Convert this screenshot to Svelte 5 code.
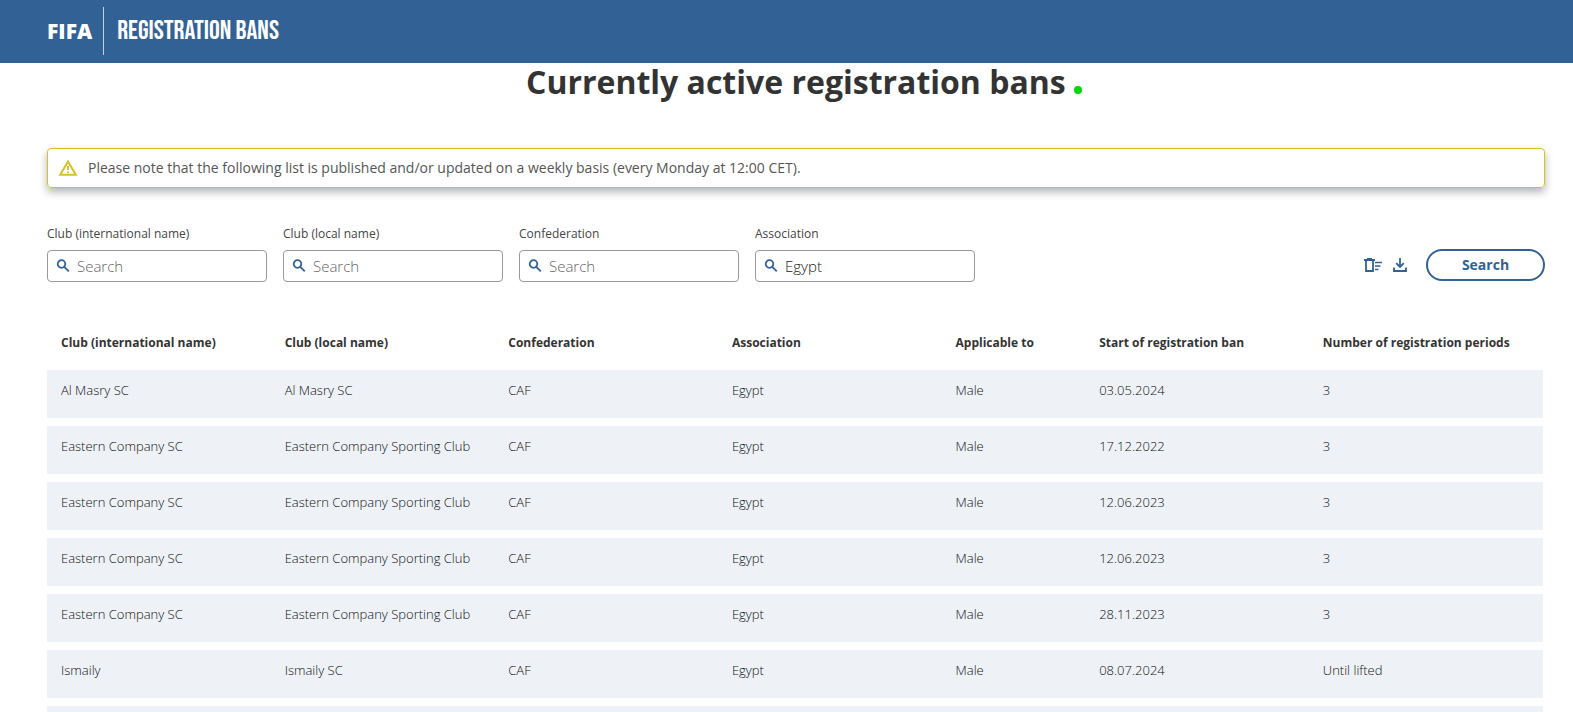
<script>
	let filters = $state([
		{ id: 'club-int', label: 'Club (international name)', value: '' },
		{ id: 'club-local', label: 'Club (local name)', value: '' },
		{ id: 'confederation', label: 'Confederation', value: '' },
		{ id: 'association', label: 'Association', value: 'Egypt' },
	])

	const columns = [
		{ title: 'Club (international name)', width: 14.95 },
		{ title: 'Club (local name)', width: 14.95 },
		{ title: 'Confederation', width: 14.95 },
		{ title: 'Association', width: 14.95 },
		{ title: 'Applicable to', width: 9.6 },
		{ title: 'Start of registration ban', width: 14.95 },
		{ title: 'Number of registration periods', width: 15.65 },
	]

	const bans = [
		['Al Masry SC', 'Al Masry SC', 'CAF', 'Egypt', 'Male', '03.05.2024', '3'],
		['Eastern Company SC', 'Eastern Company Sporting Club', 'CAF', 'Egypt', 'Male', '17.12.2022', '3'],
		['Eastern Company SC', 'Eastern Company Sporting Club', 'CAF', 'Egypt', 'Male', '12.06.2023', '3'],
		['Eastern Company SC', 'Eastern Company Sporting Club', 'CAF', 'Egypt', 'Male', '12.06.2023', '3'],
		['Eastern Company SC', 'Eastern Company Sporting Club', 'CAF', 'Egypt', 'Male', '28.11.2023', '3'],
		['Ismaily', 'Ismaily SC', 'CAF', 'Egypt', 'Male', '08.07.2024', 'Until lifted'],
		['', '', '', '', '', '', ''],
	]

	function clearFilters() {
		filters.forEach((filter) => (filter.value = ''))
	}
</script>

<div class="page">
	<header>
		<a class="logo" href="/">FIFA</a>
		<span class="divider"></span>
		<span class="app-name">REGISTRATION BANS</span>
	</header>

	<main>
		<h1>Currently active registration bans <span class="dot"></span></h1>

		<div class="notice" role="note">
			<svg width="20" height="18" viewBox="0 0 20 18" aria-hidden="true">
				<path d="M10 2.4 17.8 15.8H2.2Z" fill="none" stroke="#d6c223" stroke-width="2" />
				<path d="M10 7v4M10 12.4v1.8" fill="none" stroke="#d6c223" stroke-width="2" />
			</svg>
			<p>Please note that the following list is published and/or updated on a weekly basis (every Monday at 12:00 CET).</p>
		</div>

		<form onsubmit={(e) => e.preventDefault()}>
			{#each filters as filter (filter.id)}
				<div class="field">
					<label for={filter.id}>{filter.label}</label>
					<div class="box">
						<svg width="14" height="14" viewBox="0 0 14 14" aria-hidden="true">
							<circle cx="5.5" cy="5" r="3.8" />
							<path d="M8.2 7.8 12.8 12.4" />
						</svg>
						<input id={filter.id} type="text" placeholder="Search" bind:value={filter.value} />
					</div>
				</div>
			{/each}

			<div class="actions">
				<button type="button" class="icon" aria-label="Clear filters" onclick={clearFilters}>
					<svg width="18" height="14" viewBox="0 0 18 14">
						<path d="M0 2H11M3 1H8" />
						<path d="M2 3V13H9V3" />
						<path d="M11 4.5H18M11 8H16.5M11 11.5H14.5" stroke-width="1.5" />
					</svg>
				</button>
				<button type="button" class="icon" aria-label="Download">
					<svg width="14" height="14" viewBox="0 0 14 14">
						<path d="M7 0V8.6M3.2 5.2 7 9 10.8 5.2" />
						<path d="M1 9.5V13H13V9.5" />
					</svg>
				</button>
				<button type="submit" class="search">Search</button>
			</div>
		</form>

		<table>
			<colgroup>
				{#each columns as column}
					<col style="width: {column.width}%" />
				{/each}
			</colgroup>
			<thead>
				<tr>
					{#each columns as column}
						<th scope="col">{column.title}</th>
					{/each}
				</tr>
			</thead>
			<tbody>
				{#each bans as ban}
					<tr>
						{#each ban as cell}
							<td>{cell}</td>
						{/each}
					</tr>
				{/each}
			</tbody>
		</table>
	</main>
</div>

<style>
:global(body) {
	margin: 0;
	background: #fff;
}

.page {
	height: 100vh;
	overflow: hidden;
	font-family: "Open Sans", sans-serif;
	font-size: 12px;
	color: #333;
}

header {
	display: flex;
	align-items: center;
	box-sizing: border-box;
	height: 63px;
	padding: 0 47px 2px;
	background: #326295;
	color: #fff;
}

.logo {
	font-size: 21px;
	font-weight: 800;
	color: #fff;
	text-decoration: none;
}

.divider {
	width: 1px;
	height: 48px;
	margin: 0 13px 0 11px;
	background: #c2d0df;
}

.app-name {
	font-family: "Bebas Neue", "Roboto Condensed", "Liberation Sans Narrow", "Liberation Sans", sans-serif;
	font-size: 27px;
	font-weight: 400;
}

main {
	padding: 0 28px 0 47px;
}

h1 {
	margin: 0;
	padding-left: 16px;
	font-size: 32px;
	line-height: 38px;
	font-weight: 700;
	text-align: center;
}

.dot {
	display: inline-block;
	width: 8px;
	height: 8px;
	border-radius: 50%;
	background: #00d60a;
}

.notice {
	display: flex;
	align-items: center;
	gap: 10px;
	margin-top: 47px;
	padding: 0 10px;
	height: 38px;
	border: 1px solid #d6c223;
	border-radius: 4px;
	box-shadow: 0 4px 8px rgba(0, 0, 0, 0.3);
	font-size: 14px;
	color: #555;
}

.notice p {
	margin: 0;
	padding-bottom: 2px;
}

form {
	display: flex;
	align-items: flex-end;
	gap: 16px;
	margin-top: 36px;
}

.field {
	flex: 0 1 220px;
	min-width: 0;
}

.field label {
	display: block;
	line-height: 20px;
	margin-bottom: 6px;
	color: #444;
}

.box {
	display: flex;
	align-items: center;
	gap: 7px;
	box-sizing: border-box;
	height: 32px;
	padding: 0 8px;
	border: 1px solid #999;
	border-radius: 4px;
}

.box svg,
.icon svg {
	display: block;
	flex: none;
	fill: none;
	stroke: #326295;
	stroke-width: 1.8;
}

.box input {
	flex: 1;
	min-width: 0;
	padding: 0 0 1px;
	border: 0;
	outline: 0;
	background: none;
	font: 300 15px "Open Sans", sans-serif;
	color: #222;
}

.box input::placeholder {
	color: #666;
}

.actions {
	display: flex;
	align-items: center;
	margin-left: auto;
	padding-bottom: 1px;
}

.icon {
	padding: 0;
	margin-right: 11px;
	border: 0;
	background: none;
	cursor: pointer;
}

.search {
	width: 119px;
	height: 32px;
	margin-left: 8px;
	padding: 0 0 2px;
	border: 2px solid #326295;
	border-radius: 16px;
	background: #fff;
	font: 700 14px "Open Sans", sans-serif;
	color: #326295;
	cursor: pointer;
}

table {
	width: calc(100% - 2px);
	margin-top: 36px;
	border-collapse: separate;
	border-spacing: 0 8px;
	table-layout: fixed;
}

th,
td {
	box-sizing: border-box;
	padding: 0 0 0 14px;
	text-align: left;
	white-space: nowrap;
}

th {
	height: 36px;
	padding-bottom: 3px;
	font-weight: 700;
}

td {
	height: 48px;
	padding-bottom: 8px;
	background: #eef1f6;
	font-size: 13px;
	font-weight: 300;
	color: #111;
}
</style>
